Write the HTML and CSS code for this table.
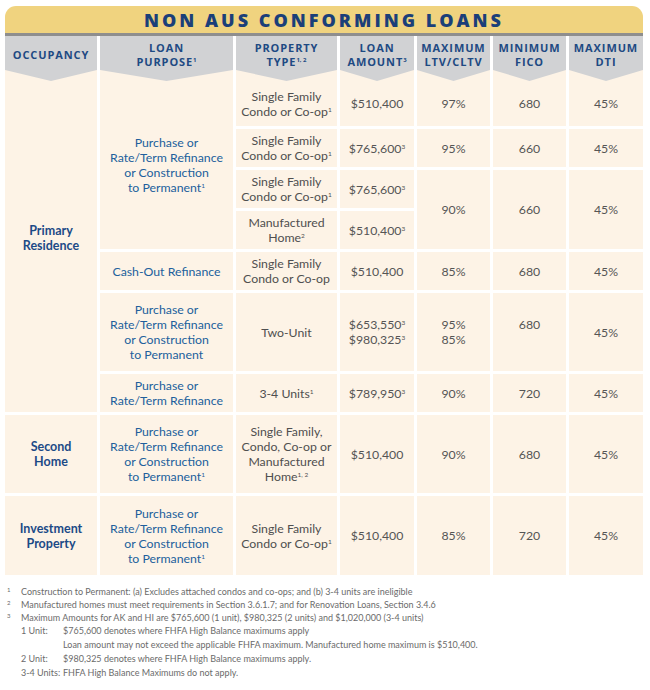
FILE: index.html
```html
<!DOCTYPE html>
<html lang="en">
<head>
<meta charset="utf-8">
<title>Non AUS Conforming Loans</title>
<link rel="stylesheet" href="styles.css">
</head>
<body>
<div class="page">
  <div class="title">NON AUS CONFORMING LOANS</div>
  <div class="head">
    <div class="hc"><div>OCCUPANCY</div></div>
    <div class="hc"><div>LOAN<br>PURPOSE<sup>1</sup></div></div>
    <div class="hc"><div>PROPERTY<br>TYPE<sup>1, 2</sup></div></div>
    <div class="hc"><div>LOAN<br>AMOUNT<sup>3</sup></div></div>
    <div class="hc"><div>MAXIMUM<br>LTV/CLTV</div></div>
    <div class="hc"><div>MINIMUM<br>FICO</div></div>
    <div class="hc"><div>MAXIMUM<br>DTI</div></div>
  </div>
  <div class="grid">
    <div class="c occ r1 span7 occ-primary"><div>Primary<br>Residence</div></div>
    <div class="c pur r1 span4"><div>Purchase or<br>Rate/Term Refinance<br>or Construction<br>to Permanent<sup>1</sup></div></div>
    <div class="c prop r1"><div>Single Family<br>Condo or Co-op<sup>1</sup></div></div>
    <div class="c num r1"><div>$510,400</div></div>
    <div class="c num r1"><div>97%</div></div>
    <div class="c num r1"><div>680</div></div>
    <div class="c num r1"><div>45%</div></div>

    <div class="c prop"><div>Single Family<br>Condo or Co-op<sup>1</sup></div></div>
    <div class="c num"><div>$765,600<sup>3</sup></div></div>
    <div class="c num"><div>95%</div></div>
    <div class="c num"><div>660</div></div>
    <div class="c num"><div>45%</div></div>

    <div class="c prop"><div>Single Family<br>Condo or Co-op<sup>1</sup></div></div>
    <div class="c num"><div>$765,600<sup>3</sup></div></div>
    <div class="c num span2"><div>90%</div></div>
    <div class="c num span2"><div>660</div></div>
    <div class="c num span2"><div>45%</div></div>

    <div class="c prop"><div>Manufactured<br>Home<sup>2</sup></div></div>
    <div class="c num"><div>$510,400<sup>3</sup></div></div>

    <div class="c pur"><div>Cash-Out Refinance</div></div>
    <div class="c prop"><div>Single Family<br>Condo or Co-op</div></div>
    <div class="c num"><div>$510,400</div></div>
    <div class="c num"><div>85%</div></div>
    <div class="c num"><div>680</div></div>
    <div class="c num"><div>45%</div></div>

    <div class="c pur"><div>Purchase or<br>Rate/Term Refinance<br>or Construction<br>to Permanent</div></div>
    <div class="c prop"><div>Two-Unit</div></div>
    <div class="c num"><div>$653,550<sup>3</sup><br>$980,325<sup>3</sup></div></div>
    <div class="c num"><div>95%<br>85%</div></div>
    <div class="c num"><div>680<br>&nbsp;</div></div>
    <div class="c num"><div>45%</div></div>

    <div class="c pur"><div>Purchase or<br>Rate/Term Refinance</div></div>
    <div class="c prop"><div>3-4 Units<sup>1</sup></div></div>
    <div class="c num"><div>$789,950<sup>3</sup></div></div>
    <div class="c num"><div>90%</div></div>
    <div class="c num"><div>720</div></div>
    <div class="c num"><div>45%</div></div>

    <div class="c occ"><div>Second<br>Home</div></div>
    <div class="c pur"><div>Purchase or<br>Rate/Term Refinance<br>or Construction<br>to Permanent<sup>1</sup></div></div>
    <div class="c prop"><div>Single Family,<br>Condo, Co-op or<br>Manufactured<br>Home<sup>1, 2</sup></div></div>
    <div class="c num"><div>$510,400</div></div>
    <div class="c num"><div>90%</div></div>
    <div class="c num"><div>680</div></div>
    <div class="c num"><div>45%</div></div>

    <div class="c occ"><div>Investment<br>Property</div></div>
    <div class="c pur"><div>Purchase or<br>Rate/Term Refinance<br>or Construction<br>to Permanent<sup>1</sup></div></div>
    <div class="c prop"><div>Single Family<br>Condo or Co-op<sup>1</sup></div></div>
    <div class="c num"><div>$510,400</div></div>
    <div class="c num"><div>85%</div></div>
    <div class="c num"><div>720</div></div>
    <div class="c num"><div>45%</div></div>
  </div>

  <div class="notes">
    <div class="fn"><span class="mark">1</span><span>Construction to Permanent: (a) Excludes attached condos and co-ops; and (b) 3-4 units are ineligible</span></div>
    <div class="fn"><span class="mark">2</span><span>Manufactured homes must meet requirements in Section 3.6.1.7; and for Renovation Loans, Section 3.4.6</span></div>
    <div class="fn"><span class="mark">3</span><span>Maximum Amounts for AK and HI are $765,600 (1 unit), $980,325 (2 units) and $1,020,000 (3-4 units)</span></div>
    <div class="sub"><span class="lbl">1 Unit:</span><span>$765,600 denotes where FHFA High Balance maximums apply</span></div>
    <div class="sub"><span class="lbl"></span><span>Loan amount may not exceed the applicable FHFA maximum. Manufactured home maximum is $510,400.</span></div>
    <div class="sub"><span class="lbl">2 Unit:</span><span>$980,325 denotes where FHFA High Balance maximums apply.</span></div>
    <div class="sub"><span class="lbl">3-4 Units:</span><span>FHFA High Balance Maximums do not apply.</span></div>
  </div>
</div>
</body>
</html>
```
FILE: styles.css
```css
html, body {
  margin: 0;
  padding: 0;
  background: #ffffff;
}
.page {
  width: 638px;
  padding: 6px 0 0 5px;
  font-family: Lato, "Open Sans", sans-serif;
}
.title {
  height: 27px;
  background: #f0d37f;
  border-radius: 11px 11px 0 0;
  border-bottom: 3px solid #8e8e8e;
  color: #1b3f79;
  font-family: "Open Sans", sans-serif;
  font-weight: 800;
  font-size: 18px;
  letter-spacing: 3px;
  line-height: 28px;
  text-align: center;
}
.head {
  display: grid;
  grid-template-columns: 92px 133px 101px 74px 73px 73px 74px;
  column-gap: 3px;
  height: 34px;
  position: relative;
  z-index: 2;
}
.hc {
  position: relative;
  background: #d1d2d4;
  color: #1e4a83;
  font-family: "Open Sans", sans-serif;
  font-weight: 700;
  font-size: 11px;
  letter-spacing: 0.9px;
  line-height: 14px;
  text-align: center;
  display: flex;
  align-items: center;
  justify-content: center;
  padding-top: 4px;
  box-sizing: border-box;
}
.hc::after {
  content: "";
  position: absolute;
  left: 0;
  top: 100%;
  width: 100%;
  height: 11px;
  background: #d1d2d4;
  clip-path: polygon(0 0, 100% 0, 50% 100%);
}
.hc sup {
  font-size: 6px;
  vertical-align: 4px;
  letter-spacing: 0;
  line-height: 0;
}
.grid {
  display: grid;
  grid-template-columns: 92px 133px 101px 74px 73px 73px 74px;
  grid-template-rows: 56px 38px 38px 38px 38px 78px 38px 78px 79px;
  gap: 3px;
}
.c {
  background: #fdf3e6;
  display: flex;
  align-items: center;
  justify-content: center;
  text-align: center;
  font-size: 12.3px;
  line-height: 15px;
  box-sizing: border-box;
}
.c sup {
  font-size: 6.5px;
  vertical-align: 4px;
  line-height: 0;
}
.r1 { padding-top: 11px; }
.span7 { grid-row: span 7; }
.span4 { grid-row: span 4; }
.span2 { grid-row: span 2; }
.occ {
  color: #1c4a86;
  font-weight: 700;
  font-size: 12.5px;
}
.occ-primary { padding-bottom: 17px; }
.pur { color: #215f9c; }
.prop { color: #4f4f4f; }
.num { color: #555555; }
.notes {
  padding-top: 10px;
  color: #6b6b6b;
  font-size: 9px;
  line-height: 13px;
}
.fn {
  display: flex;
}
.mark {
  width: 14px;
  padding-left: 2px;
  font-size: 6px;
  line-height: 10px;
  flex: none;
}
.sub {
  display: flex;
  padding-left: 16px;
  line-height: 14px;
}
.lbl {
  width: 42px;
  flex: none;
}
```
